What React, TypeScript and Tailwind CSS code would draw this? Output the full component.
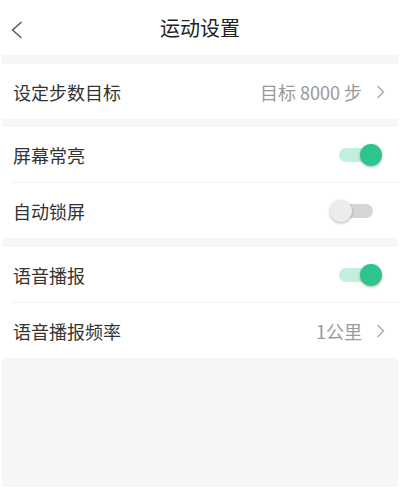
import React from "react";

const font = { fontFamily: '"Noto Sans CJK SC", "Noto Sans", sans-serif' };

function Chevron() {
  return (
    <svg width="10" height="14" viewBox="0 0 10 14" className="ml-[14px] mr-[1px]">
      <path d="M2 1.5 L7.5 7 L2 12.5" fill="none" stroke="#a8a8a8" strokeWidth="1.4" strokeLinecap="round" strokeLinejoin="round" />
    </svg>
  );
}

function Toggle({ on }: { on: boolean }) {
  return (
    <div className="relative w-[52px] h-[24px] mr-[18px]">
      <div
        className={`absolute left-[9px] top-[5px] w-[34px] h-[14px] rounded-full ${on ? "bg-[#c3f0dd]" : "bg-[#d6d6d6]"}`}
      />
      <div
        className={`absolute top-[1px] w-[22px] h-[22px] rounded-full shadow-[0_1px_3px_rgba(0,0,0,0.3)] ${on ? "left-[30px] bg-[#2ec48e]" : "left-0 bg-[#ececec]"}`}
      />
    </div>
  );
}

function Row({ label, children, divider }: { label: string; children?: React.ReactNode; divider?: boolean }) {
  return (
    <div className="relative bg-white">
      <div className="h-[55px] flex items-center justify-between pl-[13px] pr-[13px]">
        <span className="text-[18px] text-[#333333] leading-none">{label}</span>
        <div className="flex items-center">{children}</div>
      </div>
      {divider && <div className="ml-[12px] h-px bg-[#f0f0f0]" />}
    </div>
  );
}

export default function App() {
  return (
    <div className="w-[400px] h-[490px] bg-white px-[2px] pb-[3px]" style={font}>
      <div className="h-full flex flex-col bg-[#f5f6f8]">
        <div className="-mx-[2px] h-[55px] bg-white flex items-center relative">
          <svg width="14" height="18" viewBox="0 0 14 18" className="absolute left-[9px] top-[21px]">
            <path d="M12 1.5 L3.5 9 L12 16.5" fill="none" stroke="#555" strokeWidth="1.5" strokeLinecap="round" strokeLinejoin="round" />
          </svg>
          <div className="flex-1 text-center text-[20px] text-[#222] leading-none">运动设置</div>
        </div>
        <div className="h-[9px]" />
        <div className="-mx-[2px]">
          <Row label="设定步数目标">
            <span className="text-[18px] text-[#999] leading-none">目标 8000 步</span>
            <Chevron />
          </Row>
        </div>
        <div className="h-[8px]" />
        <div className="-mx-[2px]">
          <Row label="屏幕常亮" divider>
            <div className="-mr-[13px]"><Toggle on /></div>
          </Row>
          <Row label="自动锁屏">
            <div className="-mr-[13px]"><Toggle on={false} /></div>
          </Row>
        </div>
        <div className="h-[9px]" />
        <div className="-mx-[2px]">
          <Row label="语音播报" divider>
            <div className="-mr-[13px]"><Toggle on /></div>
          </Row>
          <Row label="语音播报频率">
            <span className="text-[18px] text-[#999] leading-none">1公里</span>
            <Chevron />
          </Row>
        </div>
        <div className="flex-1" />
      </div>
    </div>
  );
}
